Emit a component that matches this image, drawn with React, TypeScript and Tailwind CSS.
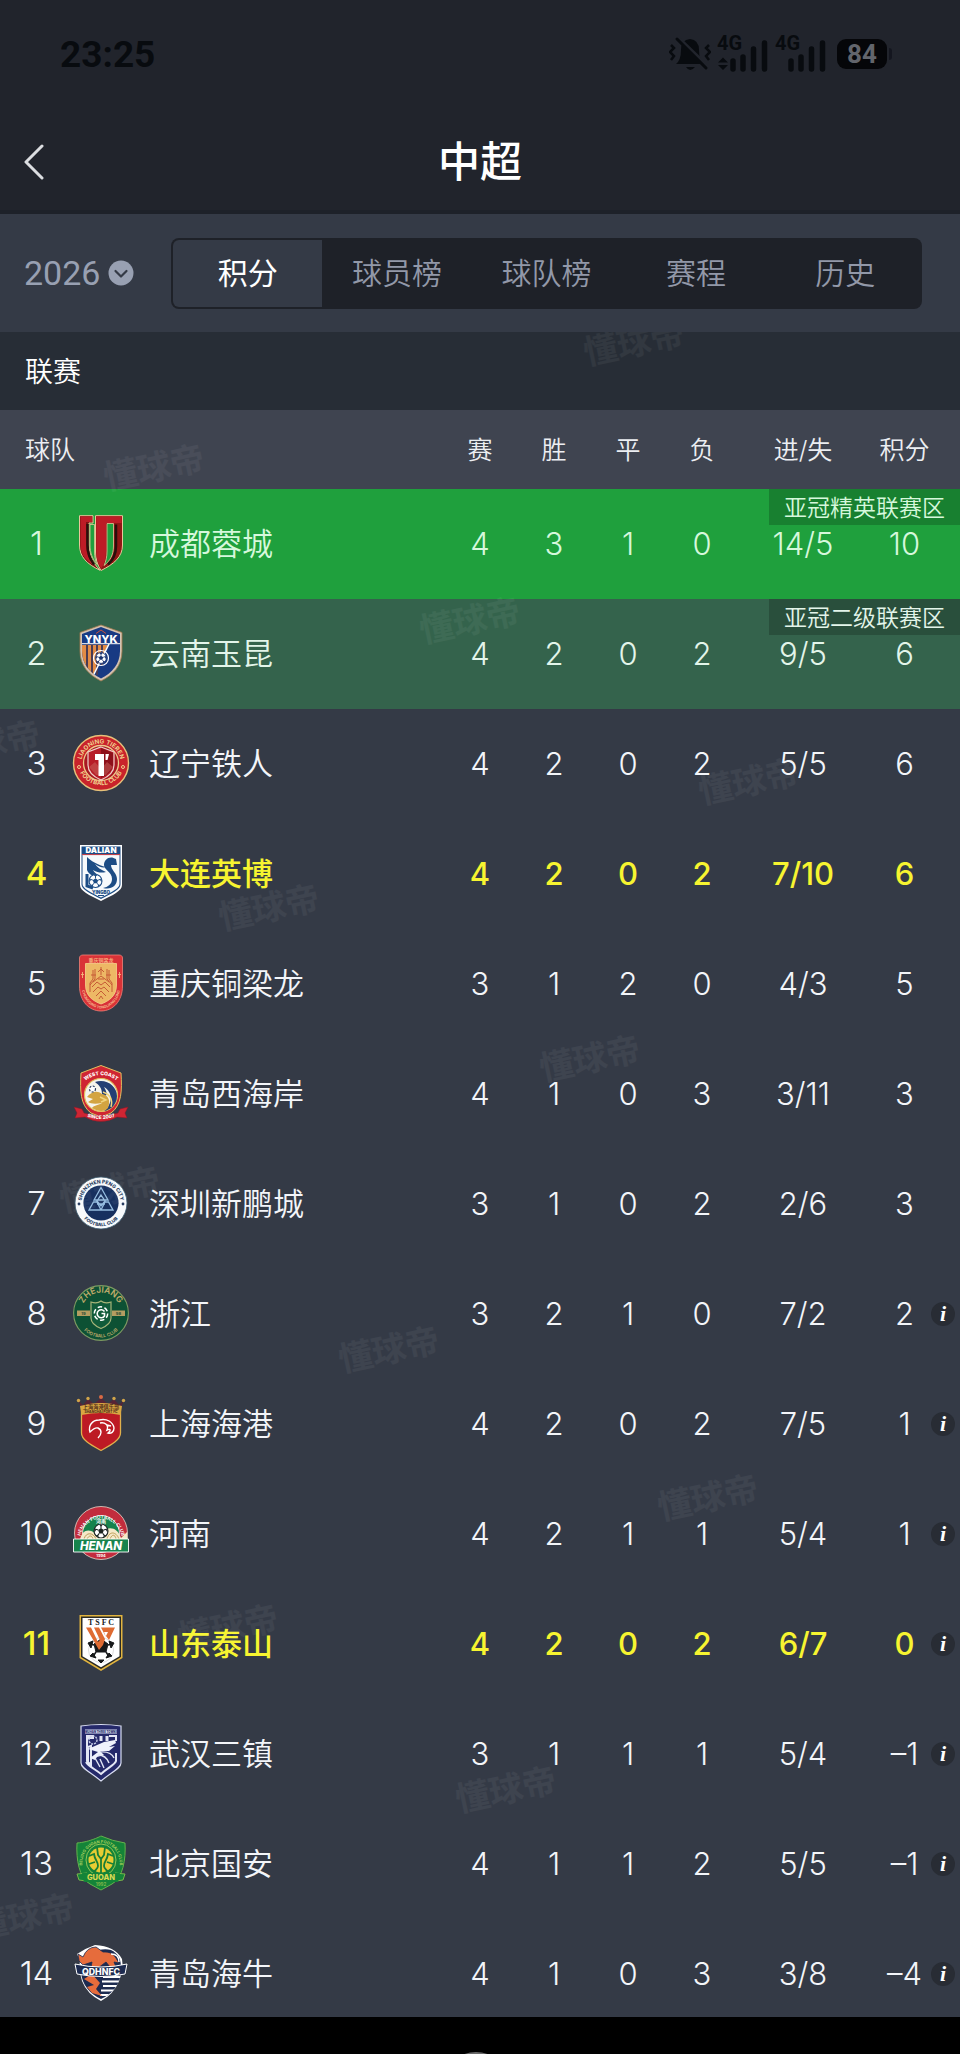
import React from "react";

/* ---------- Club badges, each drawn on a 56 x 56 grid ---------- */

function Badge({ label, children }: { label: string; children: React.ReactNode }) {
  return (
    <svg viewBox="0 0 56 56" role="img" aria-label={label} className="mx-auto block size-14 overflow-visible font-['Inter',sans-serif]">
      {children}
    </svg>
  );
}

function Football({ x, y, r, ink }: { x: number; y: number; r: number; ink: string }) {
  return (
    <g transform={`translate(${x} ${y}) scale(${r / 10})`}>
      <circle r="10" fill="#fff" stroke={ink} strokeWidth="1.6" />
      <path d="M0-4.2 4-1.3 2.5 3.4h-5L-4-1.3Z" fill={ink} />
      <path d="M0-4.2V-9M4-1.3 8.6-3M2.5 3.4 5.4 7.6M-2.5 3.4-5.4 7.6M-4-1.3-8.6-3" stroke={ink} strokeWidth="1.5" />
      <path d="M-3-9.4h6L0-6.5ZM9.6-3.5 9.4 2.4 6.9-1.8ZM-9.6-3.5-9.4 2.4-6.9-1.8ZM3 9.4 7.8 6 4.4 5.5ZM-3 9.4-7.8 6-4.4 5.5Z" fill={ink} />
    </g>
  );
}

const Chengdu = () => (
  <Badge label="成都蓉城">
    <g stroke="#e8c79a" strokeWidth="1" strokeLinejoin="round">
      <path d="M6.500 .7H20V8H16V29C16 40 20 48 27 55.3 14 49 6.500 42 6.500 30Z" fill="#7a1412" />
      <path d="M49.500 .7H22.500V37C22.500 44 24.500 50 28 55.500 41 49 49.500 42 49.500 30Z" fill="#8f1714" />
    </g>
    <path d="M7.500 1.600H19V7H13V30C13 40 17 46 22 51 12 45 7.500 39 7.500 30Z" fill="#bd1c26" />
    <path d="M23.300 1.600H48.600V8H33V37C33 44 31 49 28.200 53.500 25 48 23.300 43 23.300 37Z" fill="#bd1c26" />
    <path d="M34 8.500H40.500V31C40.500 40 37 46 31 50.500 33 46 34 42 34 36Z" fill="#1fa03d" stroke="#e8c79a" strokeWidth=".8" />
    <path d="M17 9.500H21.500V37C21.500 42 22.500 46 24 49.500 19.500 44 17 38 17 30Z" fill="#1fa03d" stroke="#e8c79a" strokeWidth=".8" />
    <path d="M14.500 9V30C14.500 38 17 44 21 49.500M43 9.500V31C43 39 40 45 35 49.500" stroke="#29100c" strokeWidth="2.500" fill="none" />
  </Badge>
);

const Yunnan = () => (
  <Badge label="云南玉昆">
    <defs>
      <clipPath id="yn-shield"><path d="M28 2 47 9V26C47 39 39 48 28 53.500 17 48 9 39 9 26V9Z" /></clipPath>
    </defs>
    <path d="M28 0 49 7.500V26C49 41 40 50 28 56 16 50 7 41 7 26V7.500Z" fill="#d3c3b3" stroke="#a47a4c" strokeWidth=".8" />
    <g clipPath="url(#yn-shield)">
      <rect width="56" height="56" fill="#183a83" />
      <path d="M9 20H35L20 50 9 45Z" fill="#e28b45" />
      <path d="M14 19V50M19 19V50M24 19V50M29 19V40" stroke="#4a3b52" strokeWidth="2" />
      <path d="M36 19 19 53" stroke="#fff" strokeWidth="1.500" />
      <path d="M9 18.700H47" stroke="#fff" strokeWidth="1" />
    </g>
    <path d="M23 8.500 28 5l5 3.500" stroke="#c9553d" strokeWidth="1" fill="none" />
    <text x="28" y="17.500" textAnchor="middle" fontSize="11" fontWeight="800" fill="#fff">YNYK</text>
    <circle cx="28" cy="33" r="7.500" fill="none" stroke="#fff" strokeWidth="1.200" />
    <Football x={28} y={33} r={5.4} ink="#1a336f" />
  </Badge>
);

const Liaoning = () => (
  <Badge label="辽宁铁人">
    <defs>
      <path id="ln-top" d="M8.500 31A19.700 19.700 0 1 1 47.500 31" />
      <path id="ln-bottom" d="M4.500 31A24 24 0 0 0 51.500 31" />
    </defs>
    <circle cx="28" cy="28" r="27.500" fill="#c9232b" stroke="#e7c17a" strokeWidth="1.400" />
    <circle cx="28" cy="28" r="17.500" fill="#a81822" stroke="#edca8b" strokeWidth="1.300" />
    <path d="M28 12 41 17V30C41 37 35 42 28 45 21 42 15 37 15 30V17Z" fill="#b71c27" stroke="#efd0cb" strokeWidth="1.200" />
    <path d="M28 13 40 18V30C39 36 34 40 28 43Z" fill="#8d101a" />
    <path d="M16 32 22 27 28 34 34 27 40 32 33 40H23Z" fill="#c9655d" opacity=".5" />
    <path d="M22 19H31V41H25.500V25H22ZM32.500 19H36L34.500 25H32.500Z" fill="#fff" />
    <g fontSize="6.200" fontWeight="700" fill="#f0cf8e">
      <text><textPath href="#ln-top" startOffset="50%" textAnchor="middle">LIAONING TIEREN</textPath></text>
      <text><textPath href="#ln-bottom" startOffset="50%" textAnchor="middle">FOOTBALL CLUB</textPath></text>
    </g>
    <circle cx="6" cy="32" r="1.500" fill="none" stroke="#f0cf8e" /><circle cx="50" cy="32" r="1.500" fill="none" stroke="#f0cf8e" />
  </Badge>
);

const Dalian = () => (
  <Badge label="大连英博">
    <path d="M7 0H49V40C49 46 40 50 28 56 16 50 7 46 7 40Z" fill="#fff" />
    <path d="M8.500 1.500H47.500V39.500C47.500 44.500 39 48.500 28 54 17 48.500 8.500 44.500 8.500 39.500Z" fill="#1d4d85" />
    <path d="M9.500 10H46.500V39C46.500 43.500 38 47.500 28 52.500 18 47.500 9.500 43.500 9.500 39Z" fill="#f7fafc" />
    <path d="M9 9.600H47" stroke="#d04146" strokeWidth="1" />
    <text x="28" y="8.300" textAnchor="middle" fontSize="8" fontWeight="900" fill="#fff">DALIAN</text>
    <path d="M43 14C37 10 31 14 31 20 31 25 39 27 39 34 39 39 35 42 30 43 38 45 44 41 44 34 44 28 38 25 38 20L44 20Z" fill="#1d4d85" />
    <path d="M14 12V25C16 30 21 32 27 31 23 29 21 27 20 25 25 28 29 28 33 27 28 25 24 22 22 19 26 22 30 23 33 22 25 20 18 16 14 12Z" fill="#1d4d85" />
    <path d="M14 29V41L20 43" stroke="#1d4d85" strokeWidth="3" fill="none" />
    <Football x={22.5} y={36} r={6.5} ink="#1d4d85" />
    <text x="28" y="48.500" textAnchor="middle" fontSize="4.500" fontWeight="900" fill="#1d4d85">YINGBO</text>
    <path d="M25 50.500H31" stroke="#1d4d85" strokeWidth="1" />
  </Badge>
);

const Chongqing = () => (
  <Badge label="重庆铜梁龙">
    <defs><path id="cq-bottom" d="M9 35C11 47 20 53.500 28 53.500S45 47 47 35" /></defs>
    <path d="M6.500 3C6.500 1 8 0 10 0H46C48 0 49.500 1 49.500 3V31C49.500 46 40 56 28 56S6.500 46 6.500 31Z" fill="#d93237" stroke="#f08077" strokeWidth=".8" />
    <path d="M12.500 8.500H43.500V30C43.500 41 36 46 28 49 20 46 12.500 41 12.500 30Z" fill="#edb865" stroke="#f6d38c" strokeWidth=".8" />
    <path d="M17 37V28L20 24V15M22 14V24L17 30M28 12V20M25 17 28 14 31 17M34 14V24L39 30M39 37V28L36 24V15M20 27 28 21 36 27M19 32 24 27 28 30 32 27 37 32M20 37 25 32 28 34 31 32 36 37M23 41 28 36 33 41M18 20H23M33 20H38M25 24H31M26 44 28 41 30 44" stroke="#c65b36" strokeWidth="1" fill="none" />
    <text x="28" y="6.800" textAnchor="middle" fontSize="5" fontWeight="700" fill="#f5ab7c" className="font-['Noto_Sans_CJK_SC',sans-serif]">重庆铜梁龙</text>
    <text fontSize="3.600" fontWeight="700" fill="#f6b68c"><textPath href="#cq-bottom" startOffset="50%" textAnchor="middle">CHONGQING TONGLIANG LONG</textPath></text>
    <path d="M9.500 17V23M8 19.500H11M46.500 17V23M45 19.500H48" stroke="#f4b77d" strokeWidth=".9" />
  </Badge>
);

const WestCoast = () => (
  <Badge label="青岛西海岸">
    <defs>
      <path id="wc-top" d="M13 15Q28 5 43 15" />
      <path id="wc-bottom" d="M12 51Q28 57 44 51" />
    </defs>
    <path d="M28 .5 48 8C49 25 49 40 38 48L28 52 18 48C7 40 7 25 8 8Z" fill="#cf2533" stroke="#e3c05f" strokeWidth="1" />
    <circle cx="28" cy="30" r="16.500" fill="#f5f4ec" stroke="#e3c05f" strokeWidth="1.200" />
    <path d="M22 17C33 13 44 21 44 31 44 39 38 45 31 46 40 39 40 27 31 22 36 30 33 33 29 29 29 23 26 20 22 17Z" fill="#243f74" />
    <path d="M14 32C18 27 24 25 29 29 35 30 38 35 35 43 32 47 25 47 19 43 21 40 26 40 29 38 23 39 18 39 15 37L20 34Z" fill="#d3a441" />
    <path d="M30 27Q41 31 38 42M27 32 33 35 28 37" stroke="#f1d57e" strokeWidth="1.500" fill="none" />
    <circle cx="19.500" cy="24" r="3" fill="#fff" stroke="#26395d" strokeWidth="1.200" strokeDasharray="2 1.500" />
    <path d="M1 42 9 44 11 48Q28 54 45 48L47 44 55 42 52 48 54 53 44 52Q28 61 12 52L2 53 4 48Z" fill="#cf2533" stroke="#8e1724" strokeWidth=".5" />
    <g fill="#fff" fontWeight="800">
      <text fontSize="5"><textPath href="#wc-top" startOffset="50%" textAnchor="middle">WEST COAST</textPath></text>
      <text fontSize="4.800"><textPath href="#wc-bottom" startOffset="50%" textAnchor="middle">SINCE 2007</textPath></text>
    </g>
  </Badge>
);

const Shenzhen = () => (
  <Badge label="深圳新鹏城">
    <defs>
      <path id="sz-top" d="M8.500 30A19.600 19.600 0 1 1 47.500 30" />
      <path id="sz-bottom" d="M4.700 30A23.400 23.400 0 0 0 51.300 30" />
    </defs>
    <circle cx="28" cy="28" r="26" fill="#f8fafc" stroke="#36566b" strokeWidth=".8" />
    <circle cx="28" cy="28" r="17.600" fill="#17305f" />
    <path d="M28 12.500 35 25H21ZM28 20 32 26 28 31 24 26ZM16 35 20.500 27H24L28 35ZM40 35 35.500 27H32L28 35ZM24 29H32" fill="none" stroke="#95bce0" strokeWidth="1.300" />
    <g fill="#263b60" fontWeight="800">
      <text fontSize="5"><textPath href="#sz-top" startOffset="50%" textAnchor="middle">SHENZHEN PENG CITY</textPath></text>
      <text fontSize="4.600"><textPath href="#sz-bottom" startOffset="50%" textAnchor="middle">FOOTBALL CLUB</textPath></text>
    </g>
    <circle cx="6" cy="29" r="1.400" fill="#263b60" /><circle cx="50" cy="29" r="1.400" fill="#263b60" />
  </Badge>
);

const Zhejiang = () => (
  <Badge label="浙江">
    <defs>
      <path id="zj-top" d="M8.500 27A19.500 19.500 0 0 1 47.500 27" />
      <path id="zj-bottom" d="M4.500 29A23.500 23.500 0 0 0 51.500 29" />
    </defs>
    <circle cx="28" cy="28" r="27.400" fill="#0d5134" stroke="#7d9a62" strokeWidth="1.100" />
    <path d="M4 25.500H17V31H4ZM39 25.500H52V31H39Z" fill="#b49d61" />
    <path d="M18 17Q24 19 28 16 32 19 38 17V33C38 38 34 41 28 43.500 22 41 18 38 18 33Z" fill="#115b3a" stroke="#a7b478" strokeWidth="1.200" />
    <circle cx="28" cy="28.500" r="6.700" fill="none" stroke="#fff" strokeWidth="1.500" strokeDasharray="4.500 2.500" />
    <path d="M31.500 26.500A4 4 0 1 0 31.500 31V28.500H28.500" fill="none" stroke="#fff" strokeWidth="1.600" />
    <g fill="#c2ac6c">
      <text fontSize="8.500" fontWeight="600"><textPath href="#zj-top" startOffset="50%" textAnchor="middle">ZHEJIANG</textPath></text>
      <text fontSize="4.600" fontWeight="600"><textPath href="#zj-bottom" startOffset="50%" textAnchor="middle">FOOTBALL CLUB</textPath></text>
    </g>
    <g fill="#345439" fontSize="4" fontWeight="800" textAnchor="middle"><text x="10.500" y="29.800">19</text><text x="45.500" y="29.800">98</text></g>
  </Badge>
);

const ShanghaiPort = () => (
  <Badge label="上海海港">
    <path d="M5 5 10 10 15 4 21 9 28 3 35 9 41 4 46 10 51 5 47 15H9Z" fill="#562436" />
    <g fill="#d0a44a"><circle cx="5.500" cy="5.500" r="1.700" /><circle cx="15" cy="3.500" r="1.700" /><circle cx="28" cy="2" r="2" fill="#d96a44" /><circle cx="41" cy="3.500" r="1.700" /><circle cx="50.500" cy="5.500" r="1.700" /></g>
    <path d="M8.500 12Q28 6 47.500 12V38C47.500 45 38 50 28 55.500 18 50 8.500 45 8.500 38Z" fill="#bd1a24" stroke="#e0b04c" strokeWidth="1.300" />
    <path d="M7 11Q28 5 49 11L47.500 20Q28 16 8.500 20Z" fill="#d9a742" />
    <text x="28" y="13.500" textAnchor="middle" fontSize="5.200" fontWeight="700" fill="#54301b" className="font-['Noto_Sans_CJK_SC',sans-serif]">上海海港俱乐部</text>
    <text x="28" y="17.800" textAnchor="middle" fontSize="3.300" fontWeight="800" fill="#54301b">SHANGHAI PORT FC</text>
    <path d="M25 43C29 39 29 35 25 33 22 32 19 35 17 37 15 31 19 25 26 25 34 23 40 27 41 33 41 37 38 39 35 38 38 36 38 33 34 35 36 30 32 27 27 28M34 30 38 31" stroke="#fff" strokeWidth="1.400" fill="none" />
  </Badge>
);

const Henan = () => (
  <Badge label="河南">
    <defs><path id="hn-top" d="M7.500 31A20.800 20.800 0 0 1 48.500 31" /></defs>
    <circle cx="28" cy="28" r="26.500" fill="#c22c3d" stroke="#e5d9cc" strokeWidth=".8" />
    <circle cx="28" cy="29" r="18.500" fill="#16834c" stroke="#fff" strokeWidth=".8" />
    <path d="M7 35C9 22 21 23 26 34 30 20 44 20 48 33L54 27 55 36H2Z" fill="#f4e9c8" />
    <path d="M11 34C13 27 20 27 23 34M14 34C16 30 19 30 20 34M34 34C36 26 43 26 46 34M37 34C39 29 42 29 43 34" stroke="#be9c57" strokeWidth="1" fill="none" />
    <Football x={28} y={26} r={7} ink="#1c2522" />
    <path d="M.5 34H55.500V47H.5Z" fill="#16834c" stroke="#fff" strokeWidth=".9" />
    <text x="28" y="44.500" textAnchor="middle" fontSize="11.500" fontWeight="800" fontStyle="italic" fill="#fff">HENAN</text>
    <text fill="#fff" fontSize="4.800" fontWeight="600"><textPath href="#hn-top" startOffset="50%" textAnchor="middle">HENAN FOOTBALL CLUB</textPath></text>
    <text x="28" y="17.500" textAnchor="middle" fontSize="5" fontWeight="700" fill="#fff" className="font-['Noto_Sans_CJK_SC',sans-serif]">河南</text>
    <text x="28" y="52" textAnchor="middle" fontSize="4" fontWeight="700" fill="#fff">1994</text>
  </Badge>
);

const Shandong = () => (
  <Badge label="山东泰山">
    <path d="M6.500 0H49.500V43L28 56 6.500 43Z" fill="#e2b43f" />
    <path d="M8 1.500H48V42L28 54 8 42Z" fill="#2b2b24" />
    <path d="M9.500 3H46.500V41.200L28 52.300 9.500 41.200Z" fill="#fff" />
    <text x="28" y="10" textAnchor="middle" fontSize="8" fontWeight="700" fill="#222" className="font-['Liberation_Serif',serif]">T S F C</text>
    <circle cx="28" cy="35" r="12.500" fill="#fff" stroke="#bbb" strokeWidth=".5" />
    <path d="M28 24 35 29 33 37H23L21 29ZM15 28 20 26 18 33ZM41 28 36 26 38 33ZM20 38 23 43 17 41ZM36 38 33 43 39 41ZM25 45H31L28 48Z" fill="#17191a" stroke="#17191a" />
    <path d="M21 30 17 29M35 30 39 29M23 37 21 40M33 37 35 40" stroke="#17191a" strokeWidth="1.500" />
    <path d="M13 12.500H18L25 27 27 25 21 12.500H26L32 24 30 30 26 35ZM28 12.500H42L36 25 33 21 35 17H31L33 22Z" fill="#df6b32" />
  </Badge>
);

const Wuhan = () => (
  <Badge label="武汉三镇">
    <path d="M8 1Q28-2 48 1V38C48 43 39 47 28 56 17 47 8 43 8 38Z" fill="#25296a" stroke="#d8dcf1" strokeWidth="1.200" />
    <path d="M12 4.500H44V8.500H12Z" fill="#dce1f3" />
    <path d="M13 11H20V13H14V36L18 40V21L15 22V37M36 11H43V16M43 28V36C42 40 34 43 28 49 22 44 15 41 13 37" fill="none" stroke="#e3e6f4" strokeWidth="2" />
    <circle cx="20" cy="15" r="4" fill="none" stroke="#c8cee9" strokeWidth="1.400" strokeDasharray="2 1" />
    <path d="M28 11V16M34 11V16" stroke="#e3e6f4" strokeWidth="3" />
    <path d="M15 24 31 17 42 15 43 18 36 22 42 21 36 26 27 26 31 30 24 32 22 35 17 33 25 27Z" fill="#f0f2fc" />
    <path d="M27 27Q38 26 41 33M25 30Q33 30 36 38M22 33 27 42M27 34 31 43" stroke="#e3e6f4" strokeWidth="1.400" fill="none" />
    <text x="28" y="7.600" textAnchor="middle" fontSize="2.800" fontWeight="800" fill="#25296a">WUHAN THREE TOWNS</text>
  </Badge>
);

const Guoan = () => (
  <Badge label="北京国安">
    <defs><path id="ga-top" d="M10 37C6 17 18 8 28 8S50 17 46 37" /></defs>
    <path d="M28 1Q39 6 52 8C53 24 50 43 39 49L28 55 17 49C6 43 3 24 4 8 17 7 28 1 28 1Z" fill="#148438" stroke="#64b24c" strokeWidth="1" />
    <path d="M4 39 14 38 13 46 6 45ZM52 39 42 38 43 46 50 45Z" fill="#148438" stroke="#80bd4c" strokeWidth=".9" />
    <ellipse cx="28" cy="25" rx="15" ry="16" fill="none" stroke="#91c655" strokeWidth="1" />
    <circle cx="28" cy="25" r="12.500" fill="#e7cc33" />
    <path d="M16 21 21 19C22 26 25 26 25 31 25 34 22 35 21 37M40 21 35 19C34 26 31 26 31 31 31 34 34 35 35 37M24 12 25 20 28 24 31 20 32 12M28 24V38M22 27 16 29M34 27 40 29" stroke="#187e35" strokeWidth="1.800" fill="none" />
    <path d="M9 38H47L45 47H11Z" fill="#148438" />
    <text x="28" y="45" textAnchor="middle" fontSize="7.500" fontWeight="800" fill="#d8d952">GUOAN</text>
    <text x="28" y="51" textAnchor="middle" fontSize="4.500" fontWeight="600" fill="#90bd4d">1992</text>
    <text fontSize="4" fontWeight="700" fill="#a3cc5c"><textPath href="#ga-top" startOffset="50%" textAnchor="middle">BEIJING GUOAN FOOTBALL CLUB</textPath></text>
  </Badge>
);

const Hainiu = () => (
  <Badge label="青岛海牛">
    <defs><clipPath id="qd-shield"><path d="M8 27H48C47 40 39 49 28 54 17 49 9 40 8 27Z" /></clipPath></defs>
    <path d="M6 24 7 16 4 9Q13 3 22 0 42 1 49 14L50 24 46 36Q41 49 28 56 14 49 9 36Z" fill="#fff" />
    <path d="M9 20C15 8 27 2 38 5 46 9 48 15 48 23H9Z" fill="#1d2b50" />
    <path d="M5 9 10 12Q14 2 23 2L30 7Q39 6 43 13L46 18 41 17 43 22H37L33 17 25 23H18L19 17 10 20 6 16Z" fill="#e66c3c" stroke="#1d2b50" strokeWidth=".8" />
    <path d="M38 9Q46 9 46 17" stroke="#fff" strokeWidth="1.500" fill="none" />
    <g clipPath="url(#qd-shield)">
      <rect x="6" y="26" width="44" height="30" fill="#1d2b50" />
      <path d="M30 32H48M29 36.500H48M30 41H46M28 45.500H43M27 50H38" stroke="#fff" strokeWidth="2" />
      <path d="M11 34 19 29 27 38 23 44 29 51 19 48 14 42 21 40Z" fill="#e66c3c" />
    </g>
    <path d="M2 19Q28 25 54 19L52 29Q28 34 4 29Z" fill="#1d2b50" stroke="#fff" strokeWidth="1" />
    <text x="28" y="29.500" textAnchor="middle" fontSize="8.800" fontWeight="800" fill="#fff">QDHNFC</text>
  </Badge>
);

/* ---------- Data ---------- */

type Team = {
  name: string;
  badge: () => React.JSX.Element;
  stats: [number, number, number, number];
  goals: string;
  points: string;
  zone?: string;
  tone?: "elite" | "second" | "marked";
  note?: boolean;
};

const teams: Team[] = [
  { name: "成都蓉城", badge: Chengdu, stats: [4, 3, 1, 0], goals: "14/5", points: "10", zone: "亚冠精英联赛区", tone: "elite" },
  { name: "云南玉昆", badge: Yunnan, stats: [4, 2, 0, 2], goals: "9/5", points: "6", zone: "亚冠二级联赛区", tone: "second" },
  { name: "辽宁铁人", badge: Liaoning, stats: [4, 2, 0, 2], goals: "5/5", points: "6" },
  { name: "大连英博", badge: Dalian, stats: [4, 2, 0, 2], goals: "7/10", points: "6", tone: "marked" },
  { name: "重庆铜梁龙", badge: Chongqing, stats: [3, 1, 2, 0], goals: "4/3", points: "5" },
  { name: "青岛西海岸", badge: WestCoast, stats: [4, 1, 0, 3], goals: "3/11", points: "3" },
  { name: "深圳新鹏城", badge: Shenzhen, stats: [3, 1, 0, 2], goals: "2/6", points: "3" },
  { name: "浙江", badge: Zhejiang, stats: [3, 2, 1, 0], goals: "7/2", points: "2", note: true },
  { name: "上海海港", badge: ShanghaiPort, stats: [4, 2, 0, 2], goals: "7/5", points: "1", note: true },
  { name: "河南", badge: Henan, stats: [4, 2, 1, 1], goals: "5/4", points: "1", note: true },
  { name: "山东泰山", badge: Shandong, stats: [4, 2, 0, 2], goals: "6/7", points: "0", tone: "marked", note: true },
  { name: "武汉三镇", badge: Wuhan, stats: [3, 1, 1, 1], goals: "5/4", points: "–1", note: true },
  { name: "北京国安", badge: Guoan, stats: [4, 1, 1, 2], goals: "5/5", points: "–1", note: true },
  { name: "青岛海牛", badge: Hainiu, stats: [4, 1, 0, 3], goals: "3/8", points: "–4", note: true },
];

const rowTone = {
  elite: "bg-[#1fa03d] font-light text-[#d6f8dc]",
  second: "bg-[#34634c] font-light text-[#e3f5ea]",
  marked: "font-medium text-[#f7f430]",
  plain: "font-light text-[#f3f5f9]",
};

const tabs = ["积分", "球员榜", "球队榜", "赛程", "历史"];

/* Watermark centres: x as a percentage of the width, y in pixels from the top of the list */
const marks: [number, number][] = [
  [66, 11], [16, 136], [49, 289], [-1, 412], [78, 450], [28, 576], [61.5, 727],
  [11.5, 858], [40.5, 1018], [73.8, 1166], [23.8, 1296], [52.7, 1458], [2.5, 1585],
];

/* ---------- Status bar ---------- */

function Signal({ data }: { data?: boolean }) {
  return (
    <svg viewBox="0 -6 52 46" className="h-[46px] w-[52px] font-['Roboto',sans-serif]" aria-hidden="true">
      <text x="0" y="13" fontSize="20" fontWeight="700" fill="currentColor">4G</text>
      <path d="M16 24v8M26 20v12M36.500 12v20M47.500 6v26" stroke="currentColor" strokeWidth="5.500" strokeLinecap="round" />
      {data && <path d="M1 25.500 6 20.500 11 25.500ZM1 28 6 33 11 28Z" fill="currentColor" />}
    </svg>
  );
}

function StatusBar() {
  return (
    <div className="flex h-28 items-center justify-between pb-1 pl-[60px] pr-[68px] text-[#080b0f]">
      <span className="font-['Roboto',sans-serif] text-[37px] font-bold leading-none">23:25</span>
      <div className="flex items-center gap-1.5">
        <svg viewBox="0 0 42 36" className="h-9 w-[42px]" role="img" aria-label="静音">
          <path d="M7 28Q12 24 12 14 12 4 21 3 30 4 30 14 30 24 35 28ZM17 31H26Q21 37 17 31Z" fill="currentColor" />
          <path d="M2 9 5 12 1 16 5 20 2 24M40 9 37 12 41 16 37 20 40 24" fill="none" stroke="currentColor" strokeWidth="2.500" />
          <path d="M11 3 40 31" stroke="#21242c" strokeWidth="3" />
          <path d="M8 3 37 32" stroke="currentColor" strokeWidth="3" strokeLinecap="round" />
        </svg>
        <Signal data />
        <Signal />
        <div className="ml-1 flex items-center gap-0.5">
          <span className="flex h-[30px] w-[50px] items-center justify-center rounded-[9px] bg-[#050609] font-['Roboto',sans-serif] text-[26px] font-bold leading-none text-[#62656c]">84</span>
          <span className="h-3 w-[3px] rounded-r-sm bg-[#14161f]" />
        </div>
      </div>
    </div>
  );
}

export default function App() {
  return (
    <div className="flex h-screen flex-col bg-[#343a46] font-['Inter','Noto_Sans_CJK_SC',sans-serif] text-white">
      <header className="shrink-0 border-b-4 border-[#1d2129] bg-[#21242c]">
        <StatusBar />
        <div className="grid h-[98px] grid-cols-[1fr_auto_1fr] items-center px-6 pt-0.5">
          <button type="button" aria-label="返回" className="justify-self-start">
            <svg viewBox="0 0 20 36" className="h-9 w-5">
              <path d="M18 2 2 18 18 34" fill="none" stroke="#dcdee1" strokeWidth="3" strokeLinecap="round" strokeLinejoin="round" />
            </svg>
          </button>
          <h1 className="text-[42px] font-medium leading-none">中超</h1>
        </div>
      </header>

      <div className="flex h-[118px] shrink-0 items-center pl-6 pr-[38px]">
        <div className="relative mr-[35px] flex w-28 shrink-0 items-center text-[#98a0b2]">
          <select aria-label="赛季" defaultValue="2026" className="w-full appearance-none bg-transparent font-['Roboto',sans-serif] text-[34px] leading-[44px] outline-none">
            <option value="2026">2026</option>
          </select>
          <svg viewBox="0 0 26 26" className="pointer-events-none absolute right-0.5 size-[26px]" aria-hidden="true">
            <circle cx="13" cy="13" r="12.500" fill="#98a0b2" />
            <path d="M7.500 11 13 16.500 18.500 11" fill="none" stroke="#343a46" strokeWidth="2.200" strokeLinecap="round" strokeLinejoin="round" />
          </svg>
        </div>
        <nav className="grid h-[71px] flex-1 grid-cols-5 rounded-lg bg-[#1e2128] p-0.5" aria-label="榜单">
          {tabs.map((tab, i) => (
            <button
              key={tab}
              type="button"
              aria-current={i === 0 ? "page" : undefined}
              className={i === 0 ? "rounded-l-md bg-[#343a46] text-[30px] leading-none text-white" : "text-[30px] font-[350] leading-none text-[#9298a8]"}
            >
              {tab}
            </button>
          ))}
        </nav>
      </div>

      <main className="relative min-h-0 flex-1 overflow-x-hidden overflow-y-auto [scrollbar-width:none]">
        <h2 className="flex h-[78px] items-center bg-[#272d36] pl-[25px] pt-0.5 text-[28px] font-[350]">联赛</h2>
        <table className="w-full table-fixed border-collapse text-center">
          <colgroup>
            <col className="w-[73px]" />
            <col className="w-[56px]" />
            <col />
            <col className="w-[74px]" />
            <col className="w-[74px]" />
            <col className="w-[74px]" />
            <col className="w-[74px]" />
            <col className="w-[128px]" />
            <col className="w-[93px]" />
          </colgroup>
          <thead>
            <tr className="h-[79px] bg-[#3f4450] text-[25px] text-[#eceef2] *:pt-0.5 *:font-[350]">
              <th scope="col" colSpan={3} className="pl-[25px] text-left">球队</th>
              <th scope="col">赛</th>
              <th scope="col">胜</th>
              <th scope="col">平</th>
              <th scope="col">负</th>
              <th scope="col">进/失</th>
              <th scope="col" className="pr-[18px]">积分</th>
            </tr>
          </thead>
          <tbody>
            {teams.map((team, i) => {
              const Crest = team.badge;
              return (
                <tr key={team.name} className={`h-[110px] text-[31px] leading-none *:pb-0.5 ${rowTone[team.tone ?? "plain"]}`}>
                  <td className="text-[33px]">{i + 1}</td>
                  <td><Crest /></td>
                  <th scope="row" className={`whitespace-nowrap pl-5 text-left ${team.tone === "marked" ? "font-medium" : "font-[350]"}`}>{team.name}</th>
                  {team.stats.map((n, k) => <td key={k}>{n}</td>)}
                  <td>{team.goals}</td>
                  <td className="relative whitespace-nowrap pr-[18px]">
                    {team.points}
                    {team.zone && (
                      <span className="absolute right-0 top-0 flex h-9 items-center bg-black/20 px-[15px] pt-0.5 text-[23px] font-[350]">{team.zone}</span>
                    )}
                    {team.note && (
                      <button
                        type="button"
                        aria-label="积分说明"
                        className="absolute inset-y-0 right-[5px] my-auto flex size-6 items-center justify-center rounded-full bg-[#282c34] font-['Liberation_Serif',serif] text-[22px] font-bold italic leading-none text-white"
                      >
                        i
                      </button>
                    )}
                  </td>
                </tr>
              );
            })}
          </tbody>
        </table>
        <div aria-hidden="true" className="pointer-events-none absolute inset-x-0 top-0 h-[1697px] overflow-hidden">
          {marks.map(([x, y]) => (
            <span
              key={y}
              style={{ left: `${x}%`, top: y }}
              className="absolute -translate-x-1/2 -translate-y-1/2 -rotate-12 whitespace-nowrap text-[34px] font-bold leading-none text-white/5"
            >
              懂球帝
            </span>
          ))}
        </div>
      </main>

      <footer className="flex h-[37px] shrink-0 justify-center overflow-hidden bg-black pr-2 pt-[35px]">
        <button type="button" aria-label="主页" className="size-16 shrink-0 rounded-full border-2 border-[#6a6a6a]" />
      </footer>
    </div>
  );
}
